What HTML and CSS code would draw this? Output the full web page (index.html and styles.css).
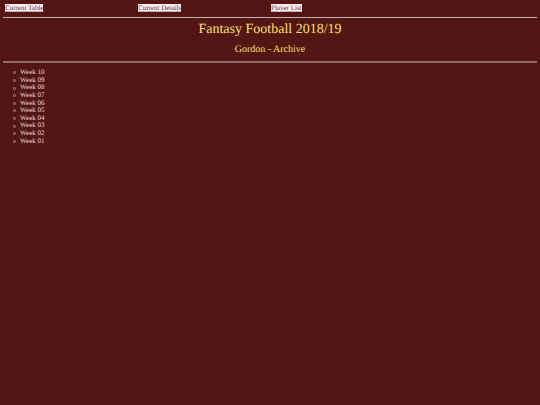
FILE: index.html
```html
<!DOCTYPE html>
<html lang="en">
<head>
<meta charset="utf-8">
<title>Fantasy Football 2018/19</title>
<link rel="stylesheet" href="styles.css">
</head>
<body>
<nav class="nav">
<a href="#table">Current Table</a>
<a href="#details">Current Details</a>
<a href="#players">Player List</a>
</nav>
<header class="header">
<h1 class="title">Fantasy Football 2018/19</h1>
<h2 class="subtitle">Gordon - Archive</h2>
</header>
<main>
<ul class="weeks">
<li>Week 10</li>
<li>Week 09</li>
<li>Week 08</li>
<li>Week 07</li>
<li>Week 06</li>
<li>Week 05</li>
<li>Week 04</li>
<li>Week 03</li>
<li>Week 02</li>
<li>Week 01</li>
</ul>
</main>
</body>
</html>
```
FILE: styles.css
```css
body {
  margin: 4px 3px;
  background: #541614;
  color: #eddcdc;
  font: 7px/8px "Liberation Serif", serif;
  text-rendering: geometricPrecision;
}

.nav {
  display: grid;
  grid-template-columns: repeat(4, 1fr);
  padding: 0 0 5px 2px;
}

.nav a {
  justify-self: start;
  background: #f6eef0;
  color: #6b3038;
  text-decoration: underline #c8acb0;
}

.header {
  padding: 4px 0 5px;
  border-top: 1px solid #c8b0ae;
  border-bottom: 2px solid #94696b;
  color: #f8e070;
  text-align: center;
}

.title,
.subtitle {
  margin: 0;
  font-weight: normal;
}

.title {
  font-size: 14px;
  line-height: 16px;
}

.subtitle {
  margin-top: 6px;
  font-size: 10px;
  line-height: 12px;
}

.weeks {
  margin: 6px 0;
  padding: 0;
  list-style: none;
  line-height: 1.09;
}

.weeks li {
  display: flex;
  align-items: center;
  gap: 4px;
  padding-left: 10px;
}

.weeks li::before {
  width: 1px;
  height: 1px;
  border: 1px solid #b08c8c;
  border-radius: 50%;
  content: "";
}
```
